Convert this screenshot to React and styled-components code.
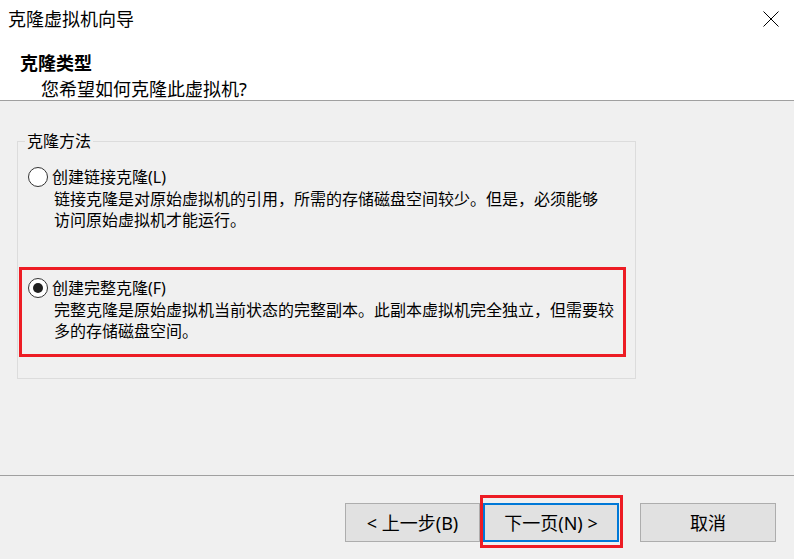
import React from "react";
import styled, { createGlobalStyle } from "styled-components";

const GlobalStyle = createGlobalStyle`
  html, body { margin: 0; padding: 0; background: #f0f0f0; }
  body {
    font-family: "Noto Sans", "Noto Sans CJK SC", sans-serif;
    color: #000;
  }
  * { box-sizing: border-box; }
`;

const Window = styled.div`
  width: 794px;
  height: 559px;
  display: flex;
  flex-direction: column;
  background: #f0f0f0;
  overflow: hidden;
`;

const TitleBar = styled.div`
  height: 38px;
  background: #fff;
  display: flex;
  align-items: center;
  justify-content: space-between;
  padding-left: 8px;
`;

const Title = styled.div`
  font-size: 18px;
  line-height: 22px;
  margin-top: -1px;
`;

const CloseButton = styled.div`
  width: 16px;
  height: 16px;
  margin-right: 15px;
  margin-top: -1px;
  display: flex;
`;

const Header = styled.div`
  height: 63px;
  background: #fff;
  border-bottom: 1px solid #a0a0a0;
  padding: 14px 0 0 20px;
`;

const HeaderTitle = styled.div`
  font-size: 18px;
  line-height: 22px;
  font-weight: 700;
`;

const HeaderSubtitle = styled.div`
  font-size: 18px;
  line-height: 22px;
  margin-top: 4px;
  padding-left: 21px;
`;

const Body = styled.div`
  flex: 1;
  padding: 31px 0 0 17px;
`;

const GroupBox = styled.fieldset`
  width: 619px;
  margin: 0;
  border: 1px solid #dcdcdc;
  padding: 6px 9px 21px 1px;
  min-width: 0;
`;

const Legend = styled.legend`
  font-size: 16px;
  line-height: 18px;
  padding: 0 2px;
  margin-left: 6px;
`;

const OptionList = styled.div`
  display: flex;
  flex-direction: column;
  gap: 21px;
`;

const Option = styled.div`
  border: 3px solid ${(p) => (p.$highlighted ? "#ed1c24" : "transparent")};
  padding: 8px 6px 12px 6px;
`;

const OptionRow = styled.label`
  display: flex;
  align-items: center;
  height: 20px;
  gap: 4px;
`;

const Radio = styled.span`
  width: 20px;
  height: 20px;
  border-radius: 50%;
  border: 1px solid #333;
  background: #fff;
  display: flex;
  align-items: center;
  justify-content: center;
  flex-shrink: 0;
  &::after {
    content: "";
    width: 10px;
    height: 10px;
    border-radius: 50%;
    background: #1f1f1f;
    display: ${(p) => (p.$checked ? "block" : "none")};
  }
`;

const OptionLabel = styled.span`
  font-size: 16px;
  line-height: 20px;
`;

const Description = styled.div`
  margin: 2px 0 0 26px;
  font-size: 16px;
  line-height: 21px;
`;

const Footer = styled.div`
  height: 84px;
  border-top: 1px solid #a0a0a0;
  display: flex;
  justify-content: flex-end;
  align-items: flex-start;
  padding: 27px 18px 0 0;
  gap: 21px;
`;

const ButtonGroup = styled.div`
  display: flex;
  gap: 3px;
`;

const Button = styled.div`
  position: relative;
  width: ${(p) => p.$width || 136}px;
  height: 39px;
  background: #e1e1e1;
  border: ${(p) => (p.$primary ? "2px solid #0078d7" : "1px solid #adadad")};
  display: flex;
  align-items: center;
  justify-content: center;
  font-size: 18px;
  line-height: 22px;
  white-space: pre;
  ${(p) =>
    p.$highlighted &&
    `
    &::after {
      content: "";
      position: absolute;
      top: -10px;
      bottom: -8px;
      left: -5px;
      right: -6px;
      border: 3px solid #ed1c24;
      pointer-events: none;
    }
  `}
`;

export default function App() {
  return (
    <>
      <GlobalStyle />
      <Window>
        <TitleBar>
          <Title>克隆虚拟机向导</Title>
          <CloseButton>
            <svg width="16" height="16" viewBox="0 0 16 16">
              <path d="M0.5 0.5 L15.5 15.5 M15.5 0.5 L0.5 15.5" stroke="#000" strokeWidth="1" fill="none" />
            </svg>
          </CloseButton>
        </TitleBar>
        <Header>
          <HeaderTitle>克隆类型</HeaderTitle>
          <HeaderSubtitle>您希望如何克隆此虚拟机?</HeaderSubtitle>
        </Header>
        <Body>
          <GroupBox>
            <Legend>克隆方法</Legend>
            <OptionList>
              <Option>
                <OptionRow>
                  <Radio />
                  <OptionLabel>创建链接克隆(L)</OptionLabel>
                </OptionRow>
                <Description>
                  链接克隆是对原始虚拟机的引用，所需的存储磁盘空间较少。但是，必须能够
                  <br />
                  访问原始虚拟机才能运行。
                </Description>
              </Option>
              <Option $highlighted>
                <OptionRow>
                  <Radio $checked />
                  <OptionLabel>创建完整克隆(F)</OptionLabel>
                </OptionRow>
                <Description>
                  完整克隆是原始虚拟机当前状态的完整副本。此副本虚拟机完全独立，但需要较
                  <br />
                  多的存储磁盘空间。
                </Description>
              </Option>
            </OptionList>
          </GroupBox>
        </Body>
        <Footer>
          <ButtonGroup>
            <Button $width={135}>{"< 上一步(B)"}</Button>
            <Button $primary $highlighted>{"下一页(N) >"}</Button>
          </ButtonGroup>
          <Button>取消</Button>
        </Footer>
      </Window>
    </>
  );
}
